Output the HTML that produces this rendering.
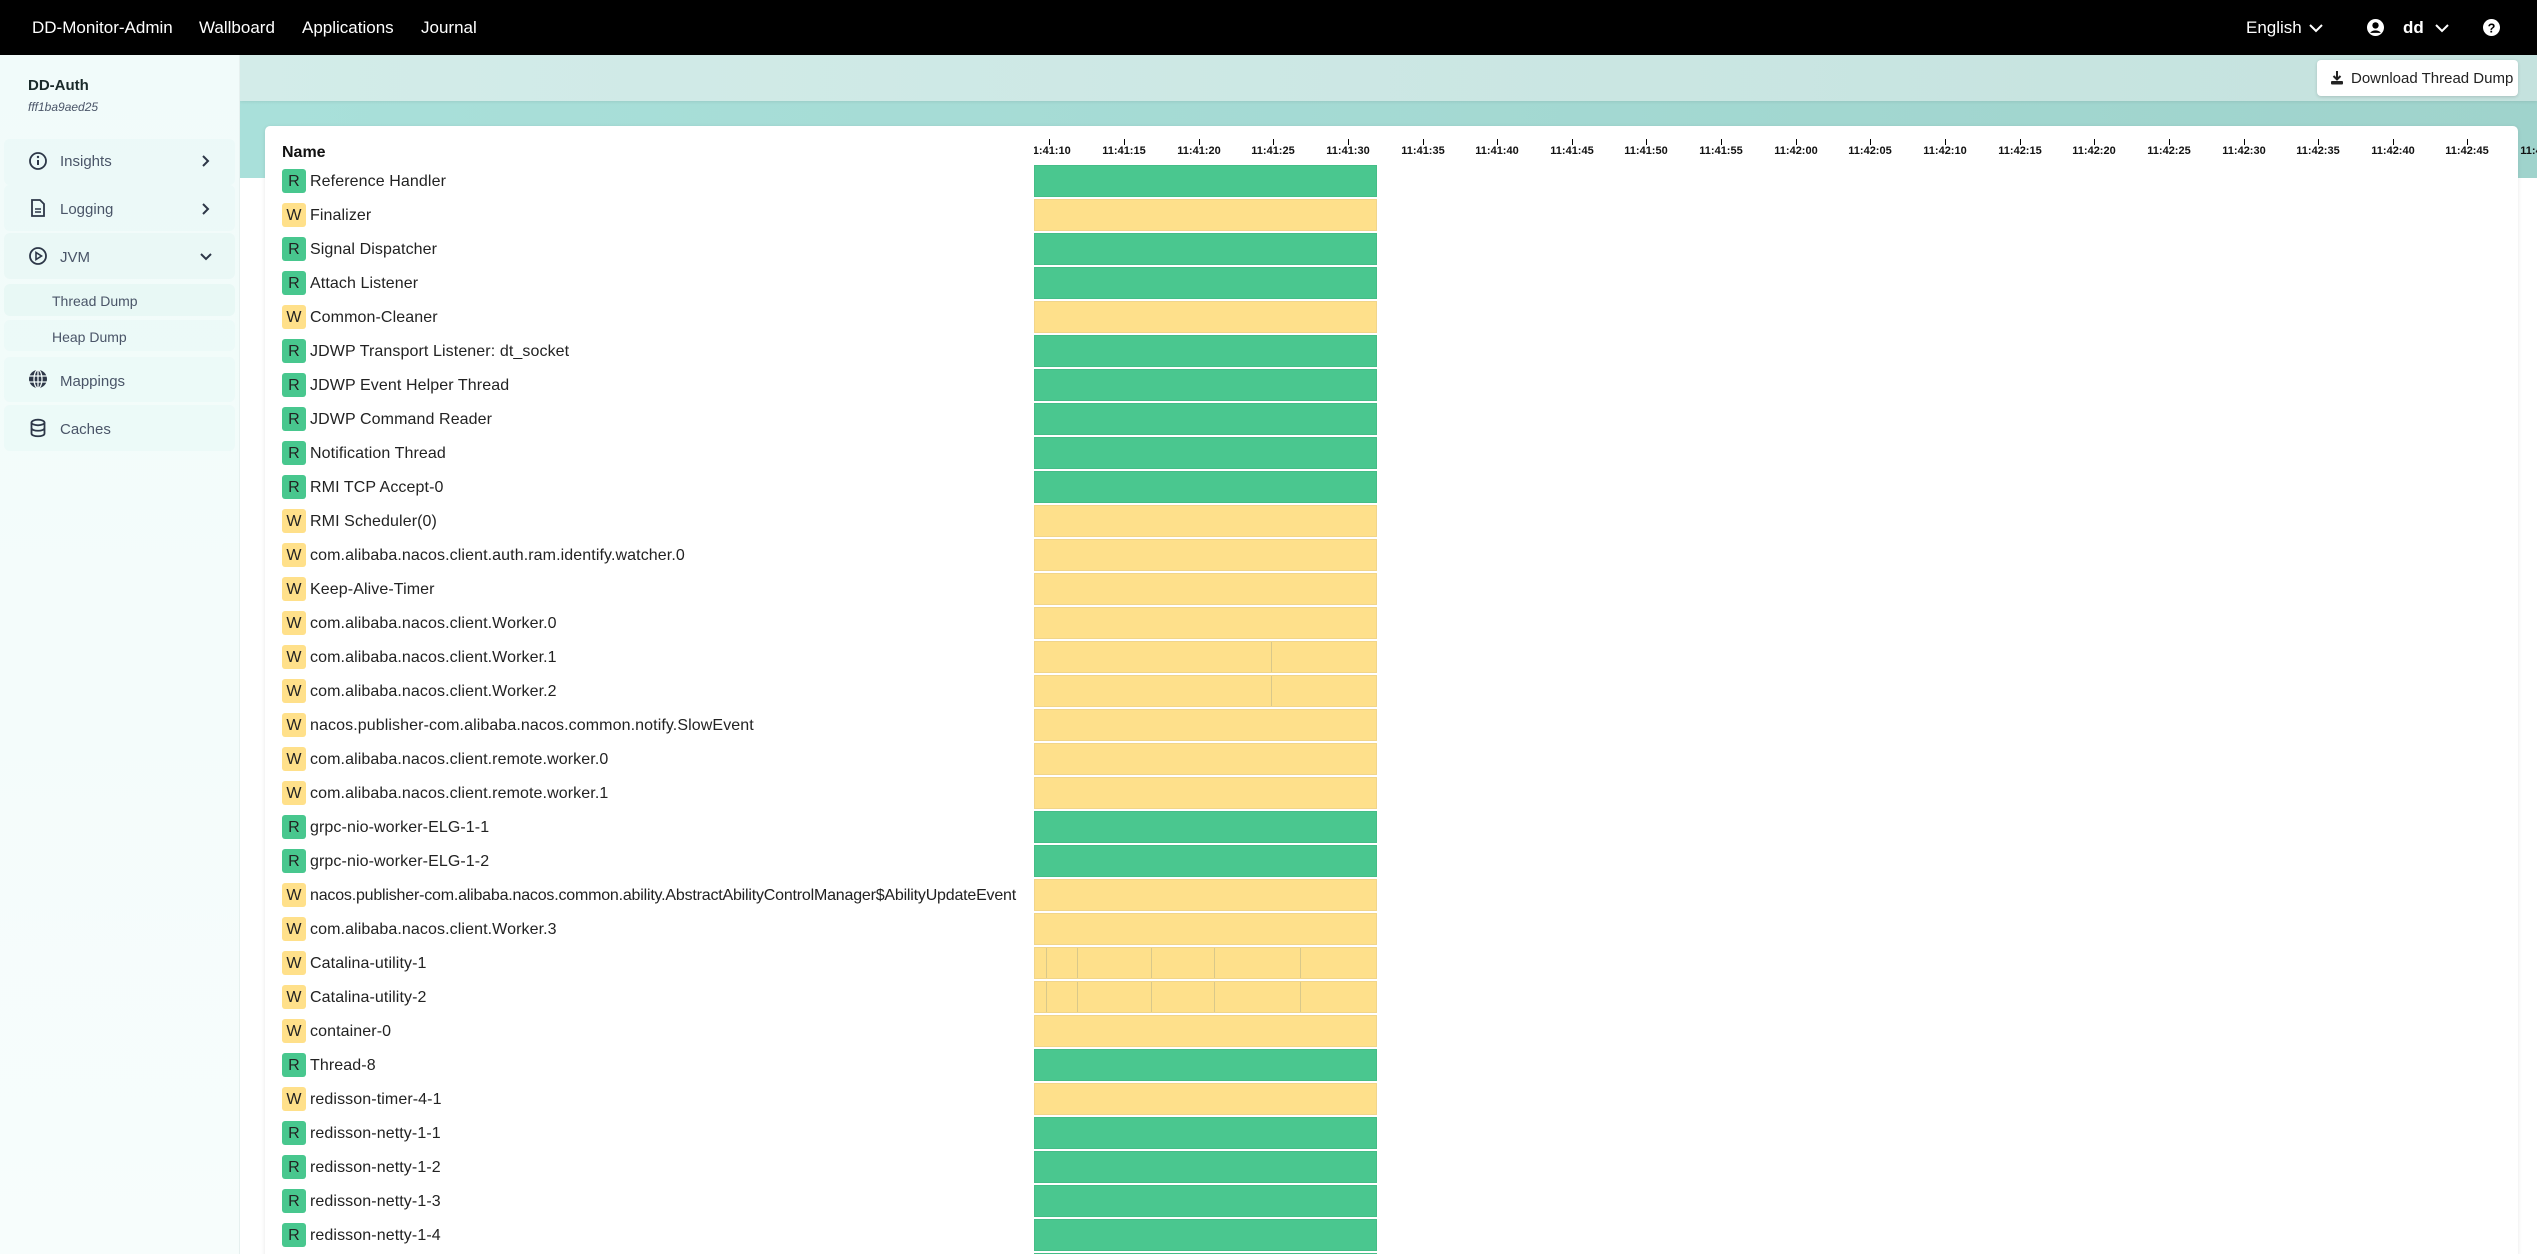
<!DOCTYPE html>
<html style="width:2537px;height:1254px;overflow:hidden"><head><meta charset="utf-8"><style>
*{box-sizing:border-box;margin:0;padding:0}
body{width:2537px;height:1254px;overflow:hidden;font-family:"Liberation Sans",sans-serif;background:#fff;position:relative;color:#222}
#wrap{position:absolute;left:0;top:0;width:2537px;height:1254px;overflow:hidden}
.top{position:absolute;left:0;top:0;width:2537px;height:55px;background:#000;color:#fff;font-size:17px}
.top span{position:absolute;top:18px}
.side{position:absolute;left:0;top:55px;width:240px;height:1199px;background:linear-gradient(180deg,#f1fbfa,#f7fdfc);border-right:1px solid #e6f0ef}
.band{position:absolute;left:240px;top:55px;right:0;height:123px;background:linear-gradient(90deg,#a9e0da,#9fd3cc)}
.band .hd{position:absolute;left:0;top:0;right:0;height:46px;background:linear-gradient(90deg,#d3ece9,#c4e2de);box-shadow:0 1px 3px rgba(0,0,0,.08)}
.it{position:absolute;left:4px;width:231px;border-radius:6px;background:rgba(230,247,245,.5)}
.lbl{position:absolute;font-size:15px;color:#4a5568}
.ic{position:absolute;left:28px}
.card{position:absolute;left:265px;top:126px;width:2253px;height:1140px;background:#fff;border-radius:5px;box-shadow:0 1px 4px rgba(0,0,0,.1)}
.row{position:absolute;left:282px;height:32px;font-size:16px;letter-spacing:.1px}
.b{position:absolute;left:0;top:4px;width:24px;height:24px;border-radius:3px;text-align:center;line-height:25px;font-size:16px}
.R{background:#48c78e}.W{background:#ffe08a}
.t{position:absolute;left:28px;top:8px;white-space:nowrap;color:#222}
.bar{position:absolute;left:1034px;width:343px;height:32px}
.bar.R{background:#4ac78f;border:1px solid #45bd87}
.bar.W{background:#fee08b;border:1px solid #f1d58a}
.ln{position:absolute;top:0;bottom:0;width:1px;background:#d9c88a}
.tk{position:absolute;top:139px;width:1px;height:6px;background:#000}
.tl{position:absolute;top:145px;font-size:11px;font-weight:bold;width:60px;text-align:center;color:#111}
</style></head><body><div id="wrap">
<div class="top">
<span style="left:32px">DD-Monitor-Admin</span>
<span style="left:199px">Wallboard</span>
<span style="left:302px">Applications</span>
<span style="left:421px">Journal</span>
<span style="left:2246px">English</span>
<svg style="position:absolute;left:2309px;top:23px" width="14" height="10" viewBox="0 0 14 10"><path d="M1 2l6 6 6-6" stroke="#fff" stroke-width="2" fill="none"/></svg>
<svg style="position:absolute;left:2367px;top:19px" width="17" height="17" viewBox="0 0 16 16"><circle cx="8" cy="8" r="8" fill="#fff"/><circle cx="8" cy="6" r="3" fill="#000"/><path d="M3 13c2-3 8-3 10 0" fill="#000"/></svg>
<span style="left:2403px;font-weight:bold">dd</span>
<svg style="position:absolute;left:2435px;top:23px" width="14" height="10" viewBox="0 0 14 10"><path d="M1 2l6 6 6-6" stroke="#fff" stroke-width="2" fill="none"/></svg>
<svg style="position:absolute;left:2483px;top:19px" width="17" height="17" viewBox="0 0 16 16"><circle cx="8" cy="8" r="8" fill="#fff"/><text x="8" y="12.5" font-size="12" font-weight="bold" text-anchor="middle" fill="#000" font-family="Liberation Sans">?</text></svg>
</div>
<div class="band"><div class="hd"></div></div>
<div style="position:absolute;left:2317px;top:60px;width:201px;height:36px;background:#fff;border-radius:4px;box-shadow:0 1px 3px rgba(0,0,0,.15);font-size:15px">
<svg style="position:absolute;left:13px;top:10px" width="14" height="15" viewBox="0 0 14 15"><path d="M7 1v8M3.5 6L7 9.5 10.5 6" stroke="#222" stroke-width="2" fill="none"/><rect x="1" y="11" width="12" height="3.5" rx="1" fill="#222"/></svg>
<span style="position:absolute;left:34px;top:10px">Download Thread Dump</span></div>
<div class="side">
<div style="position:absolute;left:28px;top:22px;font-weight:bold;font-size:15px;color:#1a2a2a">DD-Auth</div>
<div style="position:absolute;left:28px;top:45px;font-style:italic;font-size:12px;color:#4a5568">fff1ba9aed25</div>
<div class="it" style="top:84px;height:46px"></div>
<div class="it" style="top:130px;height:46px"></div>
<div class="it" style="top:178px;height:46px;background:#eaf8f6"></div>
<div class="it" style="top:229px;height:32px;background:#e8f8f5"></div>
<div class="it" style="top:265px;height:31px"></div>
<div class="it" style="top:302px;height:45px"></div>
<div class="it" style="top:350px;height:46px"></div>
<svg class="ic" style="top:96px" width="20" height="20" viewBox="0 0 20 20"><circle cx="10" cy="10" r="8" stroke="#2d3748" stroke-width="1.8" fill="none"/><path d="M10 9v5" stroke="#2d3748" stroke-width="2"/><circle cx="10" cy="6" r="1.2" fill="#2d3748"/></svg>
<div class="lbl" style="left:60px;top:98px">Insights</div>
<svg style="position:absolute;left:201px;top:99px" width="9" height="14" viewBox="0 0 9 14"><path d="M2 2l5 5-5 5" stroke="#2d3748" stroke-width="2" fill="none"/></svg>
<svg class="ic" style="top:143px" width="20" height="20" viewBox="0 0 20 20"><path d="M4 2h8l4 4v12H4z" stroke="#2d3748" stroke-width="1.8" fill="none"/><path d="M7 11h6M7 14h6" stroke="#2d3748" stroke-width="1.6"/></svg>
<div class="lbl" style="left:60px;top:146px">Logging</div>
<svg style="position:absolute;left:201px;top:147px" width="9" height="14" viewBox="0 0 9 14"><path d="M2 2l5 5-5 5" stroke="#2d3748" stroke-width="2" fill="none"/></svg>
<svg class="ic" style="top:191px" width="20" height="20" viewBox="0 0 20 20"><circle cx="10" cy="10" r="8" stroke="#2d3748" stroke-width="1.8" fill="none"/><path d="M8 6.5v7l5.5-3.5z" stroke="#2d3748" stroke-width="1.6" fill="none"/></svg>
<div class="lbl" style="left:60px;top:194px">JVM</div>
<svg style="position:absolute;left:199px;top:197px" width="14" height="9" viewBox="0 0 14 9"><path d="M2 2l5 5 5-5" stroke="#2d3748" stroke-width="2" fill="none"/></svg>
<div class="lbl" style="left:52px;top:238px;font-size:14px">Thread Dump</div>
<div class="lbl" style="left:52px;top:274px;font-size:14px">Heap Dump</div>
<svg class="ic" style="top:314px" width="20" height="20" viewBox="0 0 20 20"><circle cx="10" cy="10" r="9" fill="#2d3748"/><path d="M1 7h18M1 13h18M10 1v18" stroke="#f3fbfa" stroke-width="1.3"/><ellipse cx="10" cy="10" rx="4" ry="9" stroke="#f3fbfa" stroke-width="1.3" fill="none"/></svg>
<div class="lbl" style="left:60px;top:318px">Mappings</div>
<svg class="ic" style="top:363px" width="20" height="20" viewBox="0 0 20 20"><ellipse cx="10" cy="4.5" rx="6.5" ry="2.8" stroke="#2d3748" stroke-width="1.8" fill="none"/><path d="M3.5 4.5v11c0 3.7 13 3.7 13 0v-11M3.5 10c0 3.7 13 3.7 13 0" stroke="#2d3748" stroke-width="1.8" fill="none"/></svg>
<div class="lbl" style="left:60px;top:366px">Caches</div>
</div>
<div class="card"></div>
<div style="position:absolute;left:282px;top:144px;font-weight:bold;font-size:16px;color:#111">Name</div>
<div style="position:absolute;left:1034px;top:0;width:1503px;height:160px;overflow:hidden"><div style="position:absolute;left:-1034px;top:0;width:2600px;height:160px">
<div class="tk" style="left:1049px"></div><div class="tl" style="left:1019px">11:41:10</div>
<div class="tk" style="left:1124px"></div><div class="tl" style="left:1094px">11:41:15</div>
<div class="tk" style="left:1199px"></div><div class="tl" style="left:1169px">11:41:20</div>
<div class="tk" style="left:1273px"></div><div class="tl" style="left:1243px">11:41:25</div>
<div class="tk" style="left:1348px"></div><div class="tl" style="left:1318px">11:41:30</div>
<div class="tk" style="left:1423px"></div><div class="tl" style="left:1393px">11:41:35</div>
<div class="tk" style="left:1497px"></div><div class="tl" style="left:1467px">11:41:40</div>
<div class="tk" style="left:1572px"></div><div class="tl" style="left:1542px">11:41:45</div>
<div class="tk" style="left:1646px"></div><div class="tl" style="left:1616px">11:41:50</div>
<div class="tk" style="left:1721px"></div><div class="tl" style="left:1691px">11:41:55</div>
<div class="tk" style="left:1796px"></div><div class="tl" style="left:1766px">11:42:00</div>
<div class="tk" style="left:1870px"></div><div class="tl" style="left:1840px">11:42:05</div>
<div class="tk" style="left:1945px"></div><div class="tl" style="left:1915px">11:42:10</div>
<div class="tk" style="left:2020px"></div><div class="tl" style="left:1990px">11:42:15</div>
<div class="tk" style="left:2094px"></div><div class="tl" style="left:2064px">11:42:20</div>
<div class="tk" style="left:2169px"></div><div class="tl" style="left:2139px">11:42:25</div>
<div class="tk" style="left:2244px"></div><div class="tl" style="left:2214px">11:42:30</div>
<div class="tk" style="left:2318px"></div><div class="tl" style="left:2288px">11:42:35</div>
<div class="tk" style="left:2393px"></div><div class="tl" style="left:2363px">11:42:40</div>
<div class="tk" style="left:2467px"></div><div class="tl" style="left:2437px">11:42:45</div>
<div class="tk" style="left:2542px"></div><div class="tl" style="left:2512px">11:42:50</div>
</div></div>

<div class="row" style="top:165px"><div class="b R">R</div><div class="t">Reference Handler</div></div><div class="bar R" style="top:165px"></div>
<div class="row" style="top:199px"><div class="b W">W</div><div class="t">Finalizer</div></div><div class="bar W" style="top:199px"></div>
<div class="row" style="top:233px"><div class="b R">R</div><div class="t">Signal Dispatcher</div></div><div class="bar R" style="top:233px"></div>
<div class="row" style="top:267px"><div class="b R">R</div><div class="t">Attach Listener</div></div><div class="bar R" style="top:267px"></div>
<div class="row" style="top:301px"><div class="b W">W</div><div class="t">Common-Cleaner</div></div><div class="bar W" style="top:301px"></div>
<div class="row" style="top:335px"><div class="b R">R</div><div class="t">JDWP Transport Listener: dt_socket</div></div><div class="bar R" style="top:335px"></div>
<div class="row" style="top:369px"><div class="b R">R</div><div class="t">JDWP Event Helper Thread</div></div><div class="bar R" style="top:369px"></div>
<div class="row" style="top:403px"><div class="b R">R</div><div class="t">JDWP Command Reader</div></div><div class="bar R" style="top:403px"></div>
<div class="row" style="top:437px"><div class="b R">R</div><div class="t">Notification Thread</div></div><div class="bar R" style="top:437px"></div>
<div class="row" style="top:471px"><div class="b R">R</div><div class="t">RMI TCP Accept-0</div></div><div class="bar R" style="top:471px"></div>
<div class="row" style="top:505px"><div class="b W">W</div><div class="t">RMI Scheduler(0)</div></div><div class="bar W" style="top:505px"></div>
<div class="row" style="top:539px"><div class="b W">W</div><div class="t">com.alibaba.nacos.client.auth.ram.identify.watcher.0</div></div><div class="bar W" style="top:539px"></div>
<div class="row" style="top:573px"><div class="b W">W</div><div class="t">Keep-Alive-Timer</div></div><div class="bar W" style="top:573px"></div>
<div class="row" style="top:607px"><div class="b W">W</div><div class="t">com.alibaba.nacos.client.Worker.0</div></div><div class="bar W" style="top:607px"></div>
<div class="row" style="top:641px"><div class="b W">W</div><div class="t">com.alibaba.nacos.client.Worker.1</div></div><div class="bar W" style="top:641px"><div class="ln" style="left:236px"></div></div>
<div class="row" style="top:675px"><div class="b W">W</div><div class="t">com.alibaba.nacos.client.Worker.2</div></div><div class="bar W" style="top:675px"><div class="ln" style="left:236px"></div></div>
<div class="row" style="top:709px"><div class="b W">W</div><div class="t">nacos.publisher-com.alibaba.nacos.common.notify.SlowEvent</div></div><div class="bar W" style="top:709px"></div>
<div class="row" style="top:743px"><div class="b W">W</div><div class="t">com.alibaba.nacos.client.remote.worker.0</div></div><div class="bar W" style="top:743px"></div>
<div class="row" style="top:777px"><div class="b W">W</div><div class="t">com.alibaba.nacos.client.remote.worker.1</div></div><div class="bar W" style="top:777px"></div>
<div class="row" style="top:811px"><div class="b R">R</div><div class="t">grpc-nio-worker-ELG-1-1</div></div><div class="bar R" style="top:811px"></div>
<div class="row" style="top:845px"><div class="b R">R</div><div class="t">grpc-nio-worker-ELG-1-2</div></div><div class="bar R" style="top:845px"></div>
<div class="row" style="top:879px"><div class="b W">W</div><div class="t" style="letter-spacing:-.2px">nacos.publisher-com.alibaba.nacos.common.ability.AbstractAbilityControlManager$AbilityUpdateEvent</div></div><div class="bar W" style="top:879px"></div>
<div class="row" style="top:913px"><div class="b W">W</div><div class="t">com.alibaba.nacos.client.Worker.3</div></div><div class="bar W" style="top:913px"></div>
<div class="row" style="top:947px"><div class="b W">W</div><div class="t">Catalina-utility-1</div></div><div class="bar W" style="top:947px"><div class="ln" style="left:11px"></div><div class="ln" style="left:42px"></div><div class="ln" style="left:116px"></div><div class="ln" style="left:179px"></div><div class="ln" style="left:265px"></div></div>
<div class="row" style="top:981px"><div class="b W">W</div><div class="t">Catalina-utility-2</div></div><div class="bar W" style="top:981px"><div class="ln" style="left:11px"></div><div class="ln" style="left:42px"></div><div class="ln" style="left:116px"></div><div class="ln" style="left:179px"></div><div class="ln" style="left:265px"></div></div>
<div class="row" style="top:1015px"><div class="b W">W</div><div class="t">container-0</div></div><div class="bar W" style="top:1015px"></div>
<div class="row" style="top:1049px"><div class="b R">R</div><div class="t">Thread-8</div></div><div class="bar R" style="top:1049px"></div>
<div class="row" style="top:1083px"><div class="b W">W</div><div class="t">redisson-timer-4-1</div></div><div class="bar W" style="top:1083px"></div>
<div class="row" style="top:1117px"><div class="b R">R</div><div class="t">redisson-netty-1-1</div></div><div class="bar R" style="top:1117px"></div>
<div class="row" style="top:1151px"><div class="b R">R</div><div class="t">redisson-netty-1-2</div></div><div class="bar R" style="top:1151px"></div>
<div class="row" style="top:1185px"><div class="b R">R</div><div class="t">redisson-netty-1-3</div></div><div class="bar R" style="top:1185px"></div>
<div class="row" style="top:1219px"><div class="b R">R</div><div class="t">redisson-netty-1-4</div></div><div class="bar R" style="top:1219px"></div>
<div class="bar R" style="top:1253px;height:1px"></div>
</div></body></html>
